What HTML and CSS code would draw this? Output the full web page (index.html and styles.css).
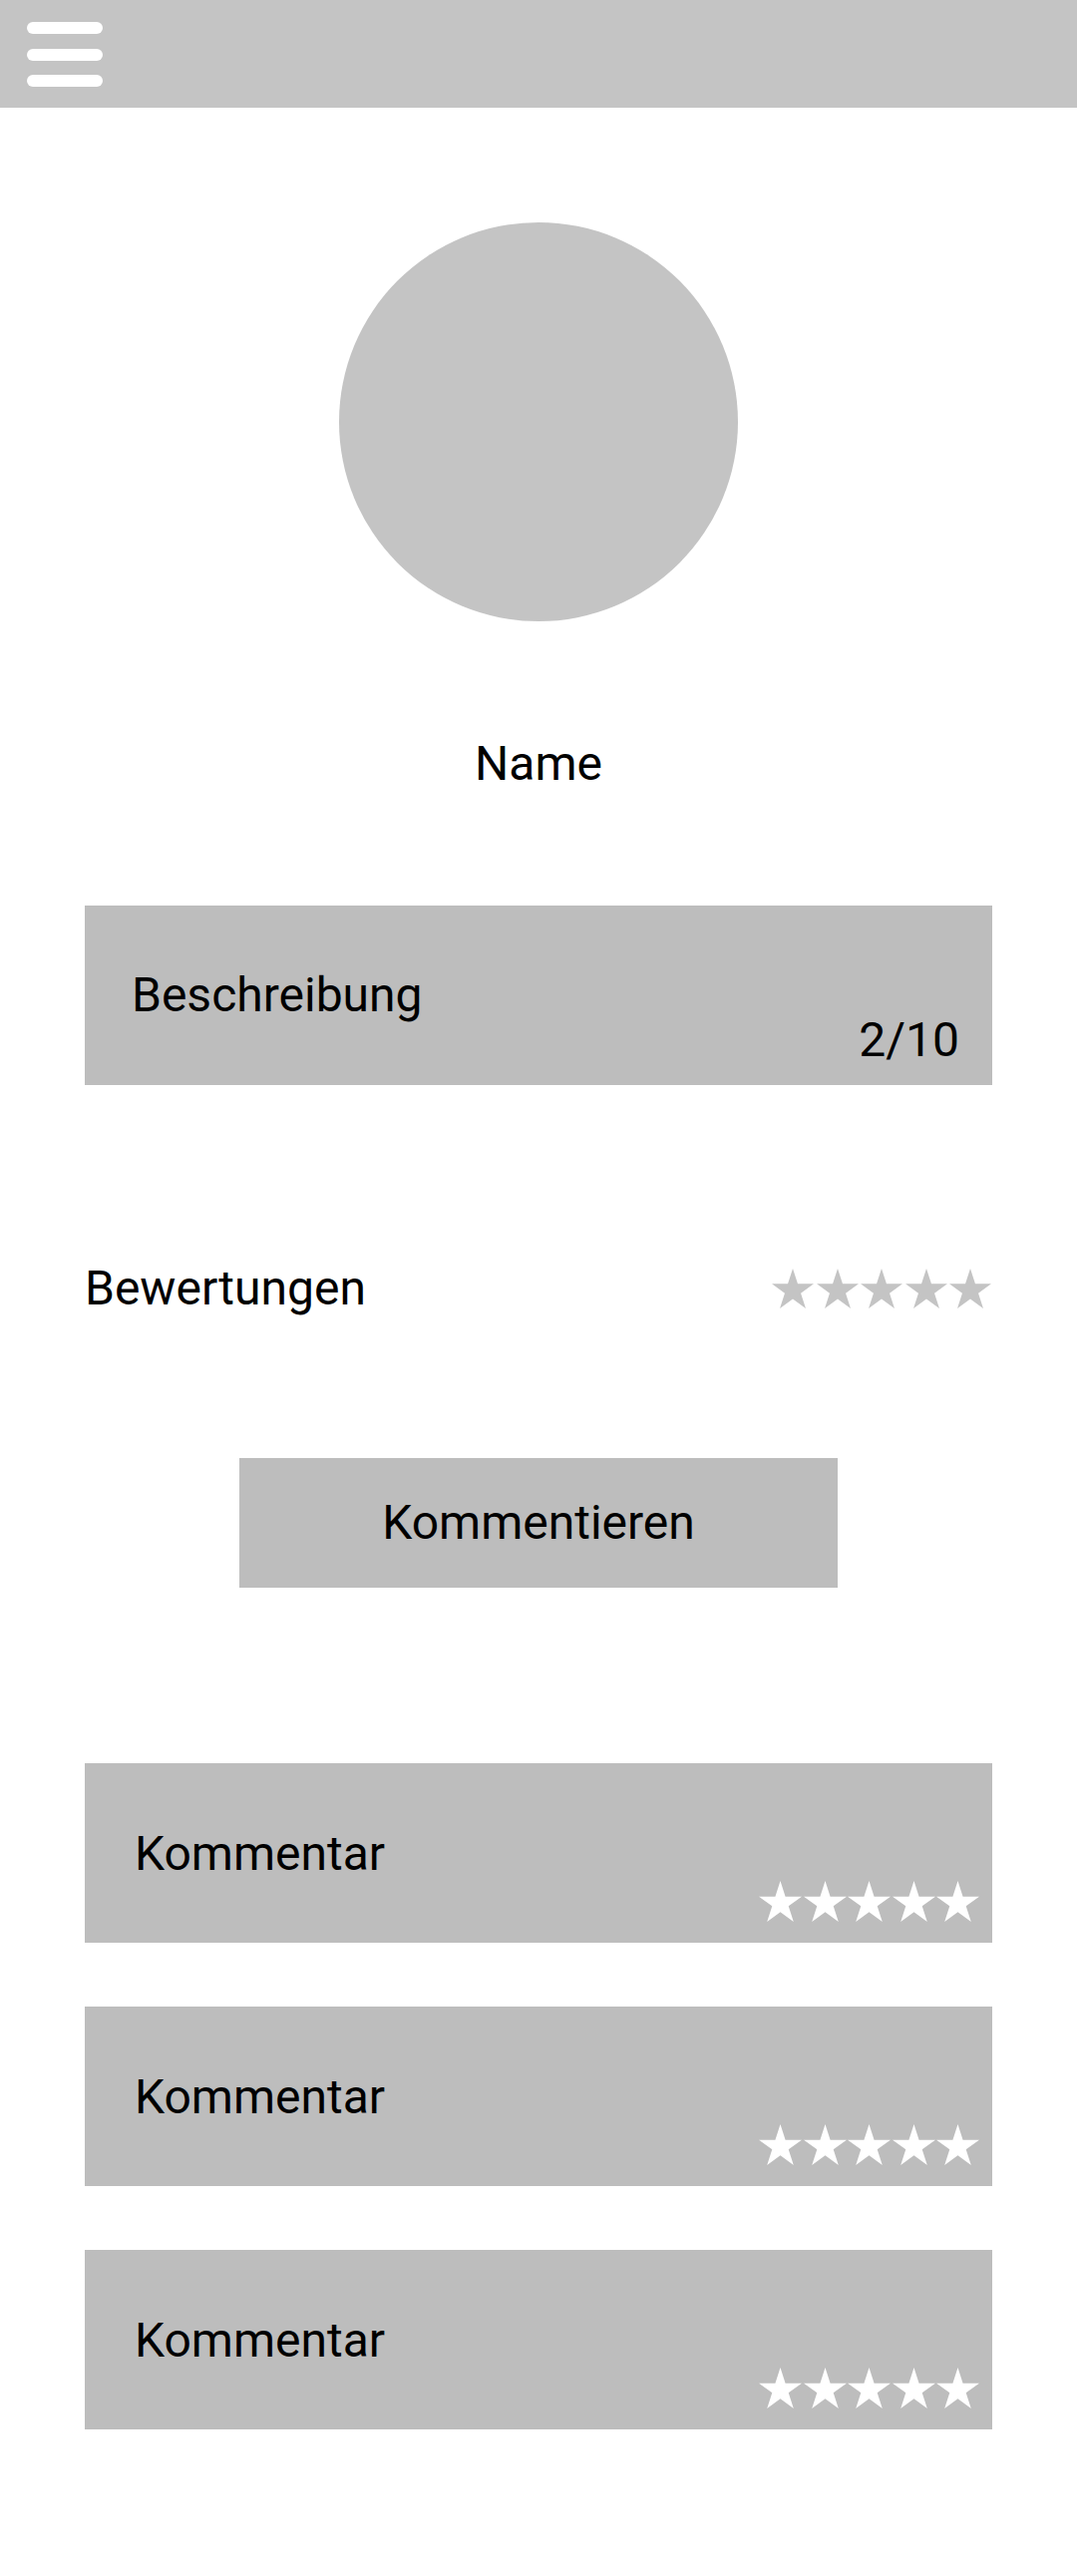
FILE: index.html
```html
<!DOCTYPE html>
<html lang="de">
<head>
<meta charset="utf-8">
<title>Profil</title>
<link rel="stylesheet" href="styles.css">
</head>
<body>
<header class="topbar">
  <div class="menu">
    <span class="bar"></span>
    <span class="bar"></span>
    <span class="bar"></span>
  </div>
</header>
<main class="content">
  <div class="avatar"></div>
  <div class="name">Name</div>
  <div class="desc">
    <div class="desc-text">Beschreibung</div>
    <div class="desc-count">2/10</div>
  </div>
  <div class="rating-row">
    <div class="rating-label">Bewertungen</div>
    <div class="stars stars-grey">
      <svg class="star" viewBox="0 0 95.1 90.45"><polygon points="47.55,0 58.78,34.55 95.1,34.55 65.72,55.9 76.94,90.45 47.55,69.1 18.16,90.45 29.38,55.9 0,34.55 36.32,34.55"/></svg>
      <svg class="star" viewBox="0 0 95.1 90.45"><polygon points="47.55,0 58.78,34.55 95.1,34.55 65.72,55.9 76.94,90.45 47.55,69.1 18.16,90.45 29.38,55.9 0,34.55 36.32,34.55"/></svg>
      <svg class="star" viewBox="0 0 95.1 90.45"><polygon points="47.55,0 58.78,34.55 95.1,34.55 65.72,55.9 76.94,90.45 47.55,69.1 18.16,90.45 29.38,55.9 0,34.55 36.32,34.55"/></svg>
      <svg class="star" viewBox="0 0 95.1 90.45"><polygon points="47.55,0 58.78,34.55 95.1,34.55 65.72,55.9 76.94,90.45 47.55,69.1 18.16,90.45 29.38,55.9 0,34.55 36.32,34.55"/></svg>
      <svg class="star" viewBox="0 0 95.1 90.45"><polygon points="47.55,0 58.78,34.55 95.1,34.55 65.72,55.9 76.94,90.45 47.55,69.1 18.16,90.45 29.38,55.9 0,34.55 36.32,34.55"/></svg>
    </div>
  </div>
  <button class="comment-btn" type="button">Kommentieren</button>
  <div class="comments">
    <div class="comment">
      <div class="comment-text">Kommentar</div>
      <div class="stars stars-white">
        <svg class="star" viewBox="0 0 95.1 90.45"><polygon points="47.55,0 58.78,34.55 95.1,34.55 65.72,55.9 76.94,90.45 47.55,69.1 18.16,90.45 29.38,55.9 0,34.55 36.32,34.55"/></svg>
        <svg class="star" viewBox="0 0 95.1 90.45"><polygon points="47.55,0 58.78,34.55 95.1,34.55 65.72,55.9 76.94,90.45 47.55,69.1 18.16,90.45 29.38,55.9 0,34.55 36.32,34.55"/></svg>
        <svg class="star" viewBox="0 0 95.1 90.45"><polygon points="47.55,0 58.78,34.55 95.1,34.55 65.72,55.9 76.94,90.45 47.55,69.1 18.16,90.45 29.38,55.9 0,34.55 36.32,34.55"/></svg>
        <svg class="star" viewBox="0 0 95.1 90.45"><polygon points="47.55,0 58.78,34.55 95.1,34.55 65.72,55.9 76.94,90.45 47.55,69.1 18.16,90.45 29.38,55.9 0,34.55 36.32,34.55"/></svg>
        <svg class="star" viewBox="0 0 95.1 90.45"><polygon points="47.55,0 58.78,34.55 95.1,34.55 65.72,55.9 76.94,90.45 47.55,69.1 18.16,90.45 29.38,55.9 0,34.55 36.32,34.55"/></svg>
      </div>
    </div>
    <div class="comment">
      <div class="comment-text">Kommentar</div>
      <div class="stars stars-white">
        <svg class="star" viewBox="0 0 95.1 90.45"><polygon points="47.55,0 58.78,34.55 95.1,34.55 65.72,55.9 76.94,90.45 47.55,69.1 18.16,90.45 29.38,55.9 0,34.55 36.32,34.55"/></svg>
        <svg class="star" viewBox="0 0 95.1 90.45"><polygon points="47.55,0 58.78,34.55 95.1,34.55 65.72,55.9 76.94,90.45 47.55,69.1 18.16,90.45 29.38,55.9 0,34.55 36.32,34.55"/></svg>
        <svg class="star" viewBox="0 0 95.1 90.45"><polygon points="47.55,0 58.78,34.55 95.1,34.55 65.72,55.9 76.94,90.45 47.55,69.1 18.16,90.45 29.38,55.9 0,34.55 36.32,34.55"/></svg>
        <svg class="star" viewBox="0 0 95.1 90.45"><polygon points="47.55,0 58.78,34.55 95.1,34.55 65.72,55.9 76.94,90.45 47.55,69.1 18.16,90.45 29.38,55.9 0,34.55 36.32,34.55"/></svg>
        <svg class="star" viewBox="0 0 95.1 90.45"><polygon points="47.55,0 58.78,34.55 95.1,34.55 65.72,55.9 76.94,90.45 47.55,69.1 18.16,90.45 29.38,55.9 0,34.55 36.32,34.55"/></svg>
      </div>
    </div>
    <div class="comment">
      <div class="comment-text">Kommentar</div>
      <div class="stars stars-white">
        <svg class="star" viewBox="0 0 95.1 90.45"><polygon points="47.55,0 58.78,34.55 95.1,34.55 65.72,55.9 76.94,90.45 47.55,69.1 18.16,90.45 29.38,55.9 0,34.55 36.32,34.55"/></svg>
        <svg class="star" viewBox="0 0 95.1 90.45"><polygon points="47.55,0 58.78,34.55 95.1,34.55 65.72,55.9 76.94,90.45 47.55,69.1 18.16,90.45 29.38,55.9 0,34.55 36.32,34.55"/></svg>
        <svg class="star" viewBox="0 0 95.1 90.45"><polygon points="47.55,0 58.78,34.55 95.1,34.55 65.72,55.9 76.94,90.45 47.55,69.1 18.16,90.45 29.38,55.9 0,34.55 36.32,34.55"/></svg>
        <svg class="star" viewBox="0 0 95.1 90.45"><polygon points="47.55,0 58.78,34.55 95.1,34.55 65.72,55.9 76.94,90.45 47.55,69.1 18.16,90.45 29.38,55.9 0,34.55 36.32,34.55"/></svg>
        <svg class="star" viewBox="0 0 95.1 90.45"><polygon points="47.55,0 58.78,34.55 95.1,34.55 65.72,55.9 76.94,90.45 47.55,69.1 18.16,90.45 29.38,55.9 0,34.55 36.32,34.55"/></svg>
      </div>
    </div>
  </div>
</main>
</body>
</html>
```

FILE: styles.css
```css
* {
  box-sizing: border-box;
}

html, body {
  margin: 0;
  padding: 0;
  background: #ffffff;
}

body {
  font-family: Roboto, "Noto Sans", "Liberation Sans", sans-serif;
  font-size: 48px;
  line-height: 56px;
  color: #000000;
  width: 1080px;
  min-height: 2583px;
}

.topbar {
  height: 108px;
  background: #c4c4c4;
  display: flex;
  align-items: flex-start;
  padding-left: 27px;
  padding-top: 22px;
}

.menu {
  display: flex;
  flex-direction: column;
  gap: 14.5px;
}

.bar {
  display: block;
  width: 76px;
  height: 12px;
  border-radius: 6px;
  background: #ffffff;
}

.content {
  display: flex;
  flex-direction: column;
  align-items: center;
  padding: 0 85px;
}

.avatar {
  margin-top: 115px;
  width: 400px;
  height: 400px;
  border-radius: 50%;
  background: #c4c4c4;
}

.name {
  margin-top: 115px;
  text-align: center;
}

.desc {
  margin-top: 114px;
  align-self: stretch;
  height: 180px;
  background: #bdbdbd;
  display: flex;
  flex-direction: column;
  padding: 67px 33px 23px 47px;
  line-height: 45px;
}

.desc-count {
  align-self: flex-end;
}

.rating-row {
  margin-top: 176px;
  align-self: stretch;
  display: flex;
  justify-content: space-between;
  align-items: center;
}

.stars {
  display: flex;
  gap: 2.5px;
}

.star {
  width: 42px;
  height: 40px;
  display: block;
}

.stars-grey {
  margin-right: 1px;
}

.stars-grey .star {
  fill: #c4c4c4;
}

.stars-white .star {
  fill: #ffffff;
  width: 43px;
  height: 41px;
}

.stars-white {
  gap: 1.5px;
}

.comment-btn {
  margin-top: 142px;
  width: 600px;
  height: 130px;
  border: none;
  border-radius: 0;
  background: #bdbdbd;
  font-family: inherit;
  font-size: 48px;
  line-height: 56px;
  color: #000000;
  padding: 0;
  display: flex;
  align-items: center;
  justify-content: center;
}

.comments {
  margin-top: 176px;
  align-self: stretch;
  display: flex;
  flex-direction: column;
  gap: 64px;
}

.comment {
  height: 180px;
  background: #bdbdbd;
  display: flex;
  flex-direction: column;
  padding: 68px 13px 0 50px;
  line-height: 45px;
}

.comment .stars {
  align-self: flex-end;
  margin-top: 5px;
}
```
